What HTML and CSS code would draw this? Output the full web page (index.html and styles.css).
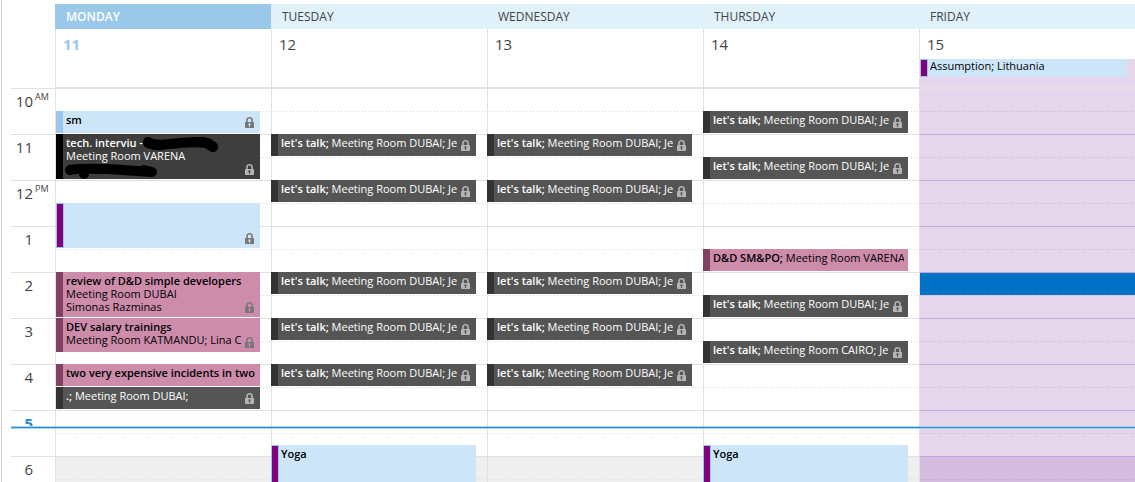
FILE: index.html
```html
<!DOCTYPE html>
<html lang="en">
<head>
	<meta charset="UTF-8">
	<title>Calendar</title>
	<link rel="stylesheet" href="styles.css">
</head>

<body>
	<svg class="symbols">
		<symbol id="lock" viewBox="0 0 9 11">
			<path d="M2 6V3a2.5 2.2 0 0 1 5 0V6" fill="none" stroke="currentColor" stroke-width="1.6"/>
			<path fill-rule="evenodd" fill="currentColor" d="M0.5 5H8.5L9 5.5V10.5L8.5 11H0.5L0 10.5V5.5ZM3.4 7.4A1.1 1 0 0 0 4 8.2V10H5V8.2A1.1 1 0 1 0 3.4 7.4Z"/>
		</symbol>
	</svg>

	<main class="calendar">
		<header class="head">
			<div class="day-head today">
				<h2>MONDAY</h2>
				<p class="date">11</p>
			</div>
			<div class="day-head">
				<h2>TUESDAY</h2>
				<p class="date">12</p>
			</div>
			<div class="day-head">
				<h2>WEDNESDAY</h2>
				<p class="date">13</p>
			</div>
			<div class="day-head">
				<h2>THURSDAY</h2>
				<p class="date">14</p>
			</div>
			<div class="day-head">
				<h2>FRIDAY</h2>
				<p class="date">15</p>
				<div class="all-day holiday">
					<article class="event blue marked">Assumption; Lithuania</article>
				</div>
			</div>
		</header>

		<section class="body">
			<div class="hours">
				<div class="hour">10<small>AM</small></div>
				<div class="hour">11</div>
				<div class="hour">12<small>PM</small></div>
				<div class="hour">1</div>
				<div class="hour">2</div>
				<div class="hour">3</div>
				<div class="hour">4</div>
				<div class="hour"><b>5</b></div>
				<div class="hour">6</div>
			</div>

			<!-- Monday -->
			<div class="day">
				<div class="off"></div>
				<article class="event blue locked at-1030">
					<p><strong>sm</strong></p>
					<svg class="lock"><use href="#lock"/></svg>
				</article>
				<article class="event black locked at-1100 hour-long">
					<p><strong>tech. interviu -</strong></p>
					<p>Meeting Room VARENA</p>
					<svg class="scribble" viewBox="0 0 204 45">
						<path d="M92 9C98 11 106 11 114 10C128 8 142 8 152 9L157 13"/>
						<path d="M92 8C95 10 99 12 106 11M138 8L148 8L157 13"/>
						<path d="M14 36C24 34 40 35 52 35C66 36 80 37 95 38M28 39V40M88 36L96 38"/>
					</svg>
					<svg class="lock"><use href="#lock"/></svg>
				</article>
				<article class="event blue marked locked at-1230 hour-long">
					<svg class="lock"><use href="#lock"/></svg>
				</article>
				<article class="event pink locked at-1400 hour-long">
					<p><strong>review of D&amp;D simple developers</strong></p>
					<p>Meeting Room DUBAI</p>
					<p>Simonas Razminas</p>
					<svg class="lock"><use href="#lock"/></svg>
				</article>
				<article class="event pink locked at-1500 hour-long ends-early">
					<p><strong>DEV salary trainings</strong></p>
					<p>Meeting Room KATMANDU; Lina C</p>
					<svg class="lock"><use href="#lock"/></svg>
				</article>
				<article class="event pink at-1600">
					<p><strong>two very expensive incidents in two w</strong></p>
				</article>
				<article class="event gray locked at-1630">
					<p><strong>.;</strong> Meeting Room DUBAI;</p>
					<svg class="lock"><use href="#lock"/></svg>
				</article>
			</div>

			<!-- Tuesday -->
			<div class="day">
				<div class="off"></div>
				<article class="event gray locked at-1100">
					<p><strong>let's talk;</strong> Meeting Room DUBAI; Je</p>
					<svg class="lock"><use href="#lock"/></svg>
				</article>
				<article class="event gray locked at-1200">
					<p><strong>let's talk;</strong> Meeting Room DUBAI; Je</p>
					<svg class="lock"><use href="#lock"/></svg>
				</article>
				<article class="event gray locked at-1400">
					<p><strong>let's talk;</strong> Meeting Room DUBAI; Je</p>
					<svg class="lock"><use href="#lock"/></svg>
				</article>
				<article class="event gray locked at-1500">
					<p><strong>let's talk;</strong> Meeting Room DUBAI; Je</p>
					<svg class="lock"><use href="#lock"/></svg>
				</article>
				<article class="event gray locked at-1600">
					<p><strong>let's talk;</strong> Meeting Room DUBAI; Je</p>
					<svg class="lock"><use href="#lock"/></svg>
				</article>
				<article class="event blue marked at-1745">
					<p><strong>Yoga</strong></p>
				</article>
			</div>

			<!-- Wednesday -->
			<div class="day">
				<div class="off"></div>
				<article class="event gray locked at-1100">
					<p><strong>let's talk;</strong> Meeting Room DUBAI; Je</p>
					<svg class="lock"><use href="#lock"/></svg>
				</article>
				<article class="event gray locked at-1200">
					<p><strong>let's talk;</strong> Meeting Room DUBAI; Je</p>
					<svg class="lock"><use href="#lock"/></svg>
				</article>
				<article class="event gray locked at-1400">
					<p><strong>let's talk;</strong> Meeting Room DUBAI; Je</p>
					<svg class="lock"><use href="#lock"/></svg>
				</article>
				<article class="event gray locked at-1500">
					<p><strong>let's talk;</strong> Meeting Room DUBAI; Je</p>
					<svg class="lock"><use href="#lock"/></svg>
				</article>
				<article class="event gray locked at-1600">
					<p><strong>let's talk;</strong> Meeting Room DUBAI; Je</p>
					<svg class="lock"><use href="#lock"/></svg>
				</article>
			</div>

			<!-- Thursday -->
			<div class="day">
				<div class="off"></div>
				<article class="event gray locked at-1030">
					<p><strong>let's talk;</strong> Meeting Room DUBAI; Je</p>
					<svg class="lock"><use href="#lock"/></svg>
				</article>
				<article class="event gray locked at-1130">
					<p><strong>let's talk;</strong> Meeting Room DUBAI; Je</p>
					<svg class="lock"><use href="#lock"/></svg>
				</article>
				<article class="event pink at-1330">
					<p><strong>D&amp;D SM&amp;PO;</strong> Meeting Room VARENA</p>
				</article>
				<article class="event gray locked at-1430">
					<p><strong>let's talk;</strong> Meeting Room DUBAI; Je</p>
					<svg class="lock"><use href="#lock"/></svg>
				</article>
				<article class="event gray locked at-1530">
					<p><strong>let's talk;</strong> Meeting Room CAIRO; Je</p>
					<svg class="lock"><use href="#lock"/></svg>
				</article>
				<article class="event blue marked at-1745">
					<p><strong>Yoga</strong></p>
				</article>
			</div>

			<!-- Friday -->
			<div class="day holiday">
				<div class="off"></div>
				<div class="selected at-1400"></div>
			</div>

			<div class="now"></div>
		</section>
	</main>
</body>
</html>
```
FILE: styles.css
```css
* {
	box-sizing: border-box;
}
body {
	margin: 0;
	background-color: white;
	color: #444;
	font-family: "Open Sans", "Noto Sans", sans-serif;
	font-size: 11px;
	line-height: 13px;
	overflow: hidden;
}
h2, p {
	margin: 0;
}
strong {
	font-weight: 600;
}
.symbols {
	display: none;
}
.calendar {
	display: flex;
	flex-direction: column;
	height: 100vh;
	margin-left: 1px;
	padding-top: 4px;
	border-left: 1px solid #d0d0d0;
}

/* day names and dates */
.head {
	display: grid;
	grid-template-columns: repeat(5, 1fr);
	flex: none;
	margin-left: 53px;
	position: relative;
	z-index: 1;
}
.day-head {
	display: flex;
	flex-direction: column;
	height: 85px;
	border-bottom: 2px solid #e1e1e1;
}
.day-head h2 {
	padding: 0 11px;
	background-color: #e0f1fa;
	font-size: 12px;
	font-weight: normal;
	line-height: 25px;
}
.date {
	padding-left: 7px;
	border-left: 1px solid #e1e1e1;
	font-size: 15px;
	line-height: 30px;
	flex: 1;
}
.today h2 {
	background-color: #9ac8e9;
	color: white;
	font-weight: 600;
}
.today .date {
	color: #9ac8e9;
	font-weight: bold;
}
.all-day {
	height: 28px;
	border-left: 1px solid #e1e1e1;
	background-color: #e5d6ec;
}
.all-day .event {
	height: 18px;
	margin: 0 8px 0 0;
	padding-top: 0;
}

/* time grid, one row is half an hour */
.body {
	display: grid;
	grid-template-columns: 53px repeat(5, 1fr);
	flex: 1;
	min-height: 0;
	margin-top: -1px;
	position: relative;
	overflow: hidden;
}
.hours {
	margin-left: 9px;
}
.hour {
	display: flex;
	justify-content: flex-end;
	height: 46px;
	padding-right: 22px;
	border-top: 1px solid #e1e1e1;
	font-size: 15px;
	line-height: 24px;
	position: relative;
}
.hour small {
	position: absolute;
	left: 24px;
	top: 2px;
	font-size: 9px;
	line-height: 12px;
}
.hour b {
	height: 16px;
	overflow: hidden;
	color: #2a8dd4;
}
.day, .off {
	--bg: white;
	--line: #e1e1e1;
	--dots: #dcdcdc;
	background-color: var(--bg);
	background-image:
		linear-gradient(var(--line) 1px, transparent 1px),
		linear-gradient(90deg, transparent 1px, var(--bg) 1px),
		linear-gradient(transparent 23px, var(--dots) 23px, var(--dots) 24px, transparent 24px);
	background-size: 100% 46px, 3px 46px, 100% 46px;
}
.day {
	display: grid;
	grid-template-columns: minmax(0, 1fr);
	grid-template-rows: repeat(18, 23px);
	border-left: 1px solid #e1e1e1;
}
.off {
	--bg: #efefef;
	grid-column: 1;
	grid-row: 17 / 19;
}
.holiday {
	--bg: #e5d6ec;
	--line: #c9a5df;
	--dots: #c9b0d8;
}
.holiday .off {
	--bg: #d5bde0;
	--line: #c9a5df;
	--dots: #c0a0d0;
}
.selected {
	grid-column: 1;
	margin-top: 1px;
	background-color: #0072c6;
}

/* appointments */
.event {
	grid-column: 1;
	margin: 0 11px 1px -1px;
	padding: 2px 4px 0 3px;
	border-left: 7px solid;
	position: relative;
	overflow: hidden;
	white-space: nowrap;
	color: black;
}
.day:nth-child(2) .event {
	margin-left: 0;
}
.event p {
	overflow-x: clip;
}
.locked {
	padding-right: 17px;
}
.blue {
	background-color: #cde6f7;
	border-color: #9ac8e9;
}
.black {
	background-color: #3e3e3e;
	border-color: black;
	color: white;
}
.gray {
	background-color: #555;
	border-color: #333;
	color: white;
}
.pink {
	background-color: #ce8cab;
	border-color: #824062;
}
.marked {
	border-left: 1px solid #9ac8e9;
	padding-left: 9px;
}
.marked::before {
	content: "";
	position: absolute;
	left: 0;
	top: 0;
	bottom: 0;
	width: 6px;
	border: 1px solid #9ac8e9;
	border-left: none;
	background-color: #800080;
}
.lock {
	position: absolute;
	right: 6px;
	bottom: 5px;
	width: 9px;
	height: 11px;
	color: #777;
}
.hour-long .lock {
	bottom: 4px;
}
.gray .lock, .black .lock {
	color: #b4b4b4;
}
.scribble {
	position: absolute;
	left: -7px;
	top: 0;
	width: 204px;
	height: 45px;
	fill: none;
	stroke: black;
	stroke-width: 10px;
	stroke-linecap: round;
	stroke-linejoin: round;
}
.at-1030 { grid-row: 2; }
.at-1100 { grid-row: 3; }
.at-1130 { grid-row: 4; }
.at-1200 { grid-row: 5; }
.at-1230 { grid-row: 6; }
.at-1330 { grid-row: 8; }
.at-1400 { grid-row: 9; }
.at-1430 { grid-row: 10; }
.at-1500 { grid-row: 11; }
.at-1530 { grid-row: 12; }
.at-1600 { grid-row: 13; }
.at-1630 { grid-row: 14; }
.at-1745 {
	grid-row: 16 / span 3;
	margin-top: 12px;
}
.hour-long {
	grid-row-end: span 2;
}
.ends-early {
	margin-bottom: 12px;
}

/* current time */
.now {
	position: absolute;
	left: 9px;
	right: 0;
	top: 338px;
	height: 3px;
	border: solid #a9d3ee;
	border-width: 1px 0;
	background-color: #2a8dd4;
}
```
